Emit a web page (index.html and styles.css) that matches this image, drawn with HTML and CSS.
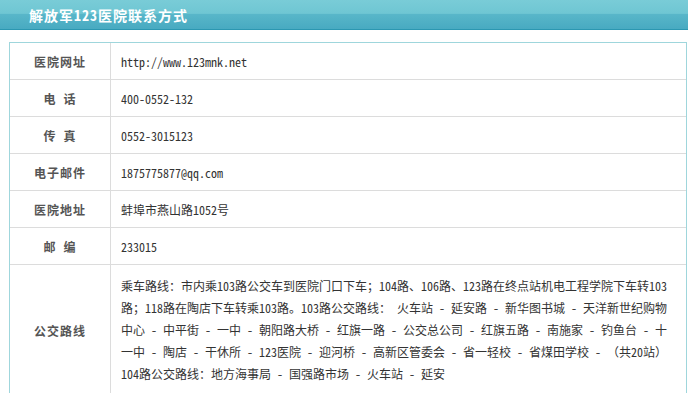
FILE: index.html
```html
<!DOCTYPE html>
<html lang="zh-CN">
<head>
<meta charset="utf-8">
<title>解放军123医院联系方式</title>
<link rel="stylesheet" href="styles.css">
</head>
<body>
<div class="title-bar"><h1 class="title">解放军123医院联系方式</h1></div>
<table class="contact">
  <tr><th>医院网址</th><td>http://www.123mnk.net</td></tr>
  <tr><th>电 话</th><td>400-0552-132</td></tr>
  <tr><th>传 真</th><td>0552-3015123</td></tr>
  <tr><th>电子邮件</th><td>1875775877@qq.com</td></tr>
  <tr><th>医院地址</th><td>蚌埠市燕山路1052号</td></tr>
  <tr><th>邮 编</th><td>233015</td></tr>
  <tr class="route"><th>公交路线</th><td>乘车路线：市内乘103路公交车到医院门口下车；104路、106路、123路在终点站机电工程学院下车转103路；118路在陶店下车转乘103路。103路公交路线：&nbsp;火车站 - 延安路 - 新华图书城 - 天洋新世纪购物中心 - 中平街 - 一中 - 朝阳路大桥 - 红旗一路 - 公交总公司 - 红旗五路 - 南施家 - 钓鱼台 - 十一中 - 陶店 - 干休所 - 123医院 - 迎河桥 - 高新区管委会 - 省一轻校 - 省煤田学校 - （共20站）<br>104路公交路线：地方海事局 - 国强路市场 - 火车站 - 延安</td></tr>
</table>
</body>
</html>
```
FILE: styles.css
```css
html, body {
  margin: 0;
  padding: 0;
  background: #fff;
}

body {
  font-family: "Noto Sans Mono CJK SC", "Liberation Mono", "Noto Sans CJK SC", monospace;
  font-size: 12px;
  color: #333;
}

.title-bar {
  height: 29px;
  border-bottom: 1px solid #2c97b1;
  background: linear-gradient(to bottom, #79ccd7 0%, #6fc6d3 46%, #58b6c9 50%, #48aac1 100%);
  display: flex;
  align-items: center;
  padding-left: 29px;
}

.title {
  margin: 0;
  font-size: 14px;
  font-weight: bold;
  color: #fff;
  letter-spacing: 1px;
  line-height: 1;
}

.contact {
  margin: 12px 0 0 9px;
  width: 678px;
  border-collapse: separate;
  border-spacing: 0;
  border: 1px solid #9fd6dc;
  table-layout: fixed;
}

.contact th,
.contact td {
  height: 36px;
  border-top: 1px solid #dcdcdc;
  vertical-align: middle;
}

.contact tr:first-child th,
.contact tr:first-child td {
  border-top: 0;
}

.contact th {
  width: 100px;
  padding: 0;
  border-right: 1px solid #dcdcdc;
  font-weight: bold;
  color: #555;
  letter-spacing: 1px;
  text-align: center;
}

.contact td {
  padding: 0 10px;
  text-align: left;
}

.contact .route td {
  padding: 10px;
  line-height: 22px;
}
```
